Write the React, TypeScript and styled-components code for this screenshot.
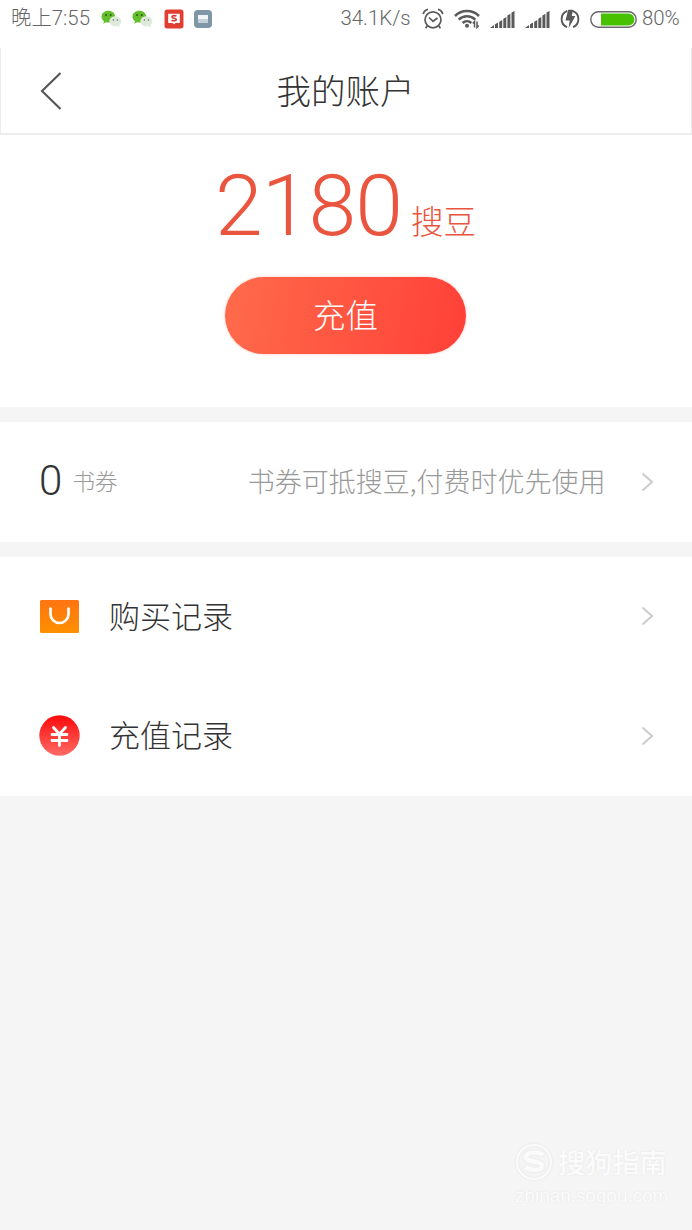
import React from "react";
import styled, { createGlobalStyle } from "styled-components";

const GlobalStyle = createGlobalStyle`
  * { box-sizing: border-box; }
  body {
    margin: 0;
    background: #f5f5f5;
    font-family: "Noto Sans CJK SC", sans-serif;
    font-weight: 300;
  }
`;

const Page = styled.main`
  width: 692px;
  height: 1230px;
  display: flex;
  flex-direction: column;
  overflow: hidden;
  background: #f5f5f5;
`;

const StatusBar = styled.div`
  height: 48px;
  flex: none;
  display: flex;
  align-items: flex-start;
  justify-content: space-between;
  padding: 5px 11px 0 11px;
  background: #fff;
  color: #666;
`;

const StatusGroup = styled.div<{ $gap: number }>`
  height: 28px;
  display: flex;
  align-items: center;
  gap: ${(p) => p.$gap}px;
  svg { display: block; flex: none; }
`;

const StatusText = styled.span<{ $width: number; $pull?: number }>`
  width: ${(p) => p.$width}px;
  margin-left: -${(p) => p.$pull ?? 0}px;
  padding-bottom: 1px;
  font-family: Roboto, "Noto Sans CJK SC", sans-serif;
  font-size: 20.4px;
  line-height: 27px;
  white-space: nowrap;
`;

const Header = styled.header`
  height: 87px;
  flex: none;
  display: grid;
  grid-template-columns: 100px 1fr 100px;
  align-items: center;
  background: #fff;
  border: 1px solid #ececec;
  border-top: 0;
  border-bottom-width: 2px;
`;

const BackButton = styled.button`
  padding: 0 0 0 37px;
  border: 0;
  background: none;
  display: flex;
`;

const Title = styled.h1`
  margin: 0;
  padding: 0 1px 4px 0;
  color: #333;
  font-size: 34.5px;
  font-weight: 300;
  line-height: 50px;
  text-align: center;
`;

const Balance = styled.section`
  height: 272px;
  flex: none;
  display: flex;
  flex-direction: column;
  align-items: center;
  background: #fff;
`;

const Amount = styled.div`
  height: 142px;
  display: flex;
  align-items: baseline;
  color: #e9553f;
`;

const AmountValue = styled.span`
  font-family: Roboto, sans-serif;
  font-size: 86px;
  line-height: 141px;
  letter-spacing: -1px;
`;

const AmountUnit = styled.span`
  margin-left: 9px;
  padding-right: 1px;
  font-size: 32.5px;
  line-height: 40px;
  transform: translateY(-1px);
`;

const Recharge = styled.button`
  width: 241px;
  height: 77px;
  margin-right: 1px;
  padding: 0 0 4px;
  border: 0;
  border-radius: 39px;
  background: linear-gradient(100deg, #ff6b4b, #ff4038);
  box-shadow: 0 0 3px rgba(255, 80, 60, 0.35);
  color: #fff;
  font: 300 32.5px/48px "Noto Sans CJK SC", sans-serif;
`;

const Panel = styled.section`
  flex: none;
  margin-top: 15px;
  background: #fff;
`;

const Row = styled.div`
  height: 119.5px;
  display: flex;
  align-items: center;
  padding: 0 38px 0 39px;
  svg { display: block; flex: none; }
`;

const CouponCount = styled.span`
  width: 33.5px;
  padding-bottom: 2px;
  color: #333;
  font-family: Roboto, sans-serif;
  font-size: 42px;
  line-height: 50px;
`;

const CouponUnit = styled.span`
  padding-bottom: 3px;
  color: #999;
  font-size: 22.5px;
`;

const CouponHint = styled.span`
  margin-left: auto;
  margin-right: 35.5px;
  padding-bottom: 2px;
  color: #999;
  font-size: 27px;
  white-space: nowrap;
`;

const RowLabel = styled.span`
  flex: 1;
  margin-left: 29px;
  padding-bottom: 3px;
  color: #333;
  font-size: 31px;
  line-height: 44px;
`;

const Watermark = styled.footer`
  margin: auto 23px 22px auto;
  width: 154px;
  color: #fbfbfb;
  text-shadow: 0 0 2px #e2e2e2;
`;

const WatermarkBrand = styled.div`
  display: flex;
  align-items: center;
  gap: 5px;
  font-size: 27.2px;
  font-weight: 500;
  line-height: 40px;
  white-space: nowrap;
  svg { flex: none; filter: drop-shadow(0 0 1px #e2e2e2); }
`;

const WatermarkName = styled.span`
  padding-bottom: 2px;
`;

const WatermarkUrl = styled.div`
  font-family: "Liberation Sans", sans-serif;
  font-size: 18.9px;
  font-weight: 400;
  line-height: 25px;
`;

const WeChat = () => (
  <svg width="21" height="19" viewBox="0 0 21 19">
    <path d="M7.300.8C3.400.8.5 3.400.5 6.700c0 1.800.9 3.400 2.500 4.500l-.8 2.500 2.900-1.500c.7.2 1.400.3 2.200.3 4 0 6.900-2.600 6.900-5.800S11.300.8 7.300.8z" fill="#63bd2c" />
    <circle cx="5" cy="5" r="1" fill="#285c12" />
    <circle cx="9.700" cy="5" r="1" fill="#285c12" />
    <path d="M14.400 6.300c-3.500 0-6 2.300-6 5s2.500 5 6 5c.7 0 1.400-.1 2-.3l2.400 1.400-.6-2.200c1.300-1 2.100-2.300 2.100-3.900 0-2.700-2.500-5-5.900-5z" fill="#e0eadc" />
    <circle cx="12.400" cy="10" r=".8" fill="#617060" />
    <circle cx="16.400" cy="10" r=".8" fill="#617060" />
  </svg>
);

const SogouApp = () => (
  <svg width="20" height="20" viewBox="0 0 19 19">
    <rect x=".5" y=".5" width="18" height="18" rx="2.500" fill="#e23d31" />
    <path d="M4 4.500h11v8.700H11l-1.500 1.300L8 13.200H4z" fill="#fff" />
    <path d="M11.800 6.800C10.700 6 7.500 6 7.500 7.500c0 1.700 4.200.8 4.200 2.500 0 1.500-3.300 1.400-4.500.5" fill="none" stroke="#d93832" strokeWidth="1.500" />
  </svg>
);

const CardApp = () => (
  <svg width="18" height="18" viewBox="0 0 18 18">
    <rect width="18" height="18" rx="4" fill="#7e96a5" />
    <rect x="4" y="5" width="10" height="8" rx=".5" fill="#c3d0d8" />
    <path d="M4 5h10v4H4z" fill="#f1f5f7" />
  </svg>
);

const Alarm = () => (
  <svg width="22" height="22" viewBox="0 0 22 22" fill="none" stroke="#5a5a5a" strokeWidth="1.700">
    <circle cx="11" cy="11.800" r="8" />
    <path d="M7 9.500l4 3.800 4.500-3.300M1.200 6.200C1.700 3.700 3.400 2 6 1.400M20.800 6.200C20.300 3.700 18.600 2 16 1.400M5.300 17.700l-1.700 2.500M16.700 17.700l1.700 2.500" />
  </svg>
);

const Wifi = () => (
  <svg width="26" height="20" viewBox="0 0 26 20" fill="none" stroke="#5a5a5a">
    <path d="M1 7C7.500.4 18.500.4 25 7M4.700 10.600c4.700-4.500 11.900-4.500 16.600 0M8.600 14c2.500-2.400 6.300-2.400 8.800 0" strokeWidth="2.500" />
    <circle cx="13" cy="16.800" r="2" fill="#5a5a5a" stroke="none" />
    <path d="M20.500 18.500v-6l-1.700 2M23 12.500v6l1.700-2" strokeWidth="1.500" />
  </svg>
);

const Signal = () => (
  <svg width="25" height="17" viewBox="0 0 25 17" fill="#5a5a5a">
    <path d="M0 17l4-3v3zM5 13.200l3-1.700V17H5zM9.200 10.700l3-1.800V17h-3zM13.300 7.700l3-1.800V17h-3zM17.400 4.600l3-1.800V17h-3zM21.500 1.600l3-1.600v17h-3z" />
  </svg>
);

const Charging = () => (
  <svg width="20" height="20" viewBox="0 0 20 20">
    <path d="M7.300 1.900A8.700 8.700 0 0 0 7 18.100M12.700 1.900A8.700 8.700 0 0 1 13 18.100" fill="none" stroke="#5a5a5a" strokeWidth="1.900" />
    <path d="M8.200.8h5L11.700 7h3.700L8.600 19.300l1.100-7.800H5.500z" fill="#5a5a5a" />
  </svg>
);

const Battery = () => (
  <svg width="47" height="17" viewBox="0 0 47 17">
    <rect x=".8" y=".8" width="45.400" height="15.400" rx="7.700" fill="#fff" stroke="#666" strokeWidth="1.400" />
    <path d="M11 2.600h27.500a5.900 5.900 0 0 1 0 11.800H11z" fill="#48c200" />
  </svg>
);

const BackIcon = () => (
  <svg width="26" height="40" viewBox="0 0 26 40">
    <path d="M22.500 2L4 20l18.500 18" fill="none" stroke="#555" strokeWidth="2.100" />
  </svg>
);

const Chevron = () => (
  <svg width="13" height="20" viewBox="0 0 13 20">
    <path d="M1.500 1.500L11 10l-9.500 8.500" fill="none" stroke="#cbcbcb" strokeWidth="2" />
  </svg>
);

const BagIcon = () => (
  <svg width="41" height="34" viewBox="0 0 41 34">
    <defs>
      <linearGradient id="bag" x1="0" y1="0" x2="0" y2="1">
        <stop offset="0" stopColor="#ff7411" />
        <stop offset="1" stopColor="#ff9000" />
      </linearGradient>
    </defs>
    <rect x="1" y="1" width="39" height="33" rx="1.500" fill="url(#bag)" />
    <path d="M11.500 9.500v5.500a9 9 0 0 0 18 0v-5.500" fill="none" stroke="#fff" strokeWidth="2.700" strokeLinecap="round" />
  </svg>
);

const YuanIcon = () => (
  <svg width="41" height="41" viewBox="0 0 41 41">
    <defs>
      <linearGradient id="yuan" x1="0" y1="0" x2="0" y2="1">
        <stop offset="0" stopColor="#fb0a0a" />
        <stop offset="1" stopColor="#ff6b66" />
      </linearGradient>
    </defs>
    <circle cx="20.500" cy="20.500" r="20.200" fill="url(#yuan)" />
    <path d="M14.500 12.500l6 6.500 6-6.500M20.500 19v11.500M13 19.500h15M13 25.500h15" fill="none" stroke="#fff" strokeWidth="2.800" strokeLinecap="round" />
  </svg>
);

const SogouMark = () => (
  <svg width="38" height="38" viewBox="0 0 38 38" fill="none" stroke="#fbfbfb">
    <circle cx="19" cy="19" r="17" strokeWidth="2" />
    <path d="M28 12c-5-4-17-3-17 2 0 6 16 3 16 9 0 5-12 5-17 1" strokeWidth="4.500" />
  </svg>
);

export default function App() {
  return (
    <Page>
      <GlobalStyle />
      <StatusBar>
        <StatusGroup $gap={10.5}>
          <StatusText $width={79}>晚上7:55</StatusText>
          <WeChat />
          <WeChat />
          <SogouApp />
          <CardApp />
        </StatusGroup>
        <StatusGroup $gap={10}>
          <StatusText $width={71.5}>34.1K/s</StatusText>
          <Alarm />
          <Wifi />
          <Signal />
          <Signal />
          <Charging />
          <Battery />
          <StatusText $width={39} $pull={5}>80%</StatusText>
        </StatusGroup>
      </StatusBar>
      <Header>
        <BackButton aria-label="返回"><BackIcon /></BackButton>
        <Title>我的账户</Title>
      </Header>
      <Balance>
        <Amount>
          <AmountValue>2180</AmountValue>
          <AmountUnit>搜豆</AmountUnit>
        </Amount>
        <Recharge>充值</Recharge>
      </Balance>
      <Panel>
        <Row>
          <CouponCount>0</CouponCount>
          <CouponUnit>书券</CouponUnit>
          <CouponHint>书券可抵搜豆,付费时优先使用</CouponHint>
          <Chevron />
        </Row>
      </Panel>
      <Panel>
        <Row>
          <BagIcon />
          <RowLabel>购买记录</RowLabel>
          <Chevron />
        </Row>
        <Row>
          <YuanIcon />
          <RowLabel>充值记录</RowLabel>
          <Chevron />
        </Row>
      </Panel>
      <Watermark>
        <WatermarkBrand><SogouMark /><WatermarkName>搜狗指南</WatermarkName></WatermarkBrand>
        <WatermarkUrl>zhinan.sogou.com</WatermarkUrl>
      </Watermark>
    </Page>
  );
}
